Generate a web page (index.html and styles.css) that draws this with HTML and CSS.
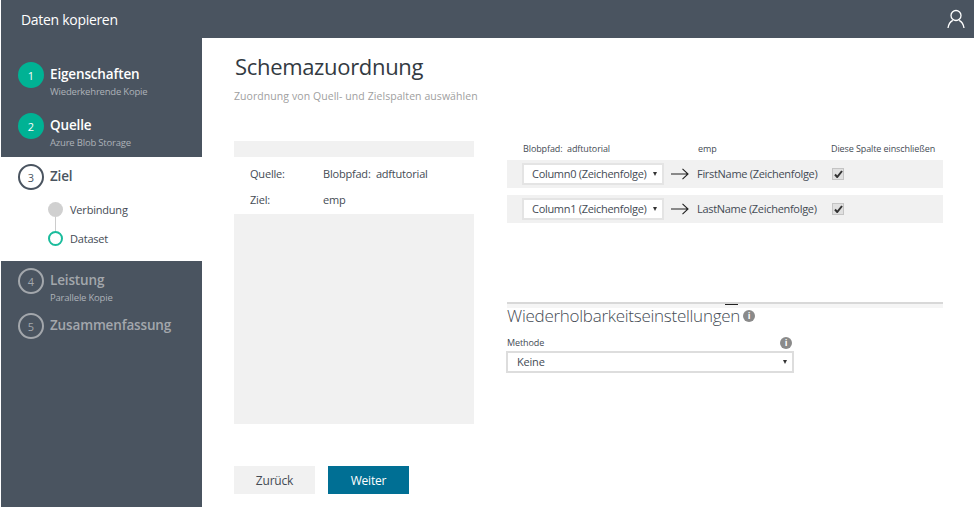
FILE: index.html
```html
<!DOCTYPE html>
<html lang="de">
<head>
  <meta charset="UTF-8">
  <title>Daten kopieren</title>
  <link rel="stylesheet" href="styles.css">
</head>
<body>
  <header class="topbar">
    <div class="app-title">Daten kopieren</div>
    <svg class="user-icon" width="18" height="20" viewBox="0 0 18 20" fill="none" stroke="#fff" stroke-width="1.3">
      <circle cx="9" cy="6.5" r="5"/>
      <path d="M1 19c.6-4 2.8-6.6 4.8-7.6M17 19c-.6-4-2.8-6.6-4.8-7.6"/>
    </svg>
  </header>
  <div class="layout">
    <nav class="sidebar">
      <div class="step step-done step-first">
        <span class="step-num">1</span>
        <div class="step-text">
          <div class="step-name">Eigenschaften</div>
          <div class="step-sub">Wiederkehrende Kopie</div>
        </div>
      </div>
      <div class="step step-done step-second">
        <span class="step-num">2</span>
        <div class="step-text">
          <div class="step-name">Quelle</div>
          <div class="step-sub">Azure Blob Storage</div>
        </div>
      </div>
      <div class="step-active">
        <div class="step step-current">
          <span class="step-num">3</span>
          <div class="step-text">
            <div class="step-name">Ziel</div>
          </div>
        </div>
        <div class="substeps">
          <div class="substep">
            <span class="dot dot-done"></span>
            <span>Verbindung</span>
          </div>
          <div class="substep">
            <span class="dot dot-current"></span>
            <span>Dataset</span>
          </div>
        </div>
      </div>
      <div class="step step-todo step-fourth">
        <span class="step-num">4</span>
        <div class="step-text">
          <div class="step-name">Leistung</div>
          <div class="step-sub">Parallele Kopie</div>
        </div>
      </div>
      <div class="step step-todo step-fifth">
        <span class="step-num">5</span>
        <div class="step-text">
          <div class="step-name">Zusammenfassung</div>
        </div>
      </div>
    </nav>
    <main class="content">
      <h1>Schemazuordnung</h1>
      <p class="subtitle">Zuordnung von Quell- und Zielspalten auswählen</p>
      <div class="columns">
        <section class="summary">
          <div class="summary-strip"></div>
          <div class="summary-rows">
            <div class="summary-row"><span class="summary-key">Quelle:</span><span>Blobpfad:&nbsp; adftutorial</span></div>
            <div class="summary-row"><span class="summary-key">Ziel:</span><span>emp</span></div>
          </div>
          <div class="summary-fill"></div>
        </section>
        <section class="mapping">
          <div class="map-head">
            <span class="map-col-source">Blobpfad:&nbsp; adftutorial</span>
            <span class="map-col-target">emp</span>
            <span>Diese Spalte einschließen</span>
          </div>
          <div class="map-row">
            <div class="fake-select map-select">Column0 (Zeichenfolge)<span class="caret"></span></div>
            <svg class="arrow" width="18" height="12" viewBox="0 0 18 12" fill="none" stroke="#222" stroke-width="1.1"><path d="M0 6h17M11.500 .8 17 6l-5.500 5.200"/></svg>
            <span class="map-target">FirstName (Zeichenfolge)</span>
            <span class="check"><svg width="9" height="8" viewBox="0 0 9 8" fill="none" stroke="#333" stroke-width="2"><path d="M1 4.500 3.200 7 8 1"/></svg></span>
          </div>
          <div class="map-row">
            <div class="fake-select map-select">Column1 (Zeichenfolge)<span class="caret"></span></div>
            <svg class="arrow" width="18" height="12" viewBox="0 0 18 12" fill="none" stroke="#222" stroke-width="1.1"><path d="M0 6h17M11.500 .8 17 6l-5.500 5.200"/></svg>
            <span class="map-target">LastName (Zeichenfolge)</span>
            <span class="check"><svg width="9" height="8" viewBox="0 0 9 8" fill="none" stroke="#333" stroke-width="2"><path d="M1 4.500 3.200 7 8 1"/></svg></span>
          </div>
          <div class="repeat">
            <span class="repeat-mark"></span>
            <h2>Wiederholbarkeitseinstellungen<span class="info">i</span></h2>
            <div class="field">
              <div class="field-label"><span>Methode</span><span class="info">i</span></div>
              <div class="fake-select method-select">Keine<span class="caret"></span></div>
            </div>
          </div>
        </section>
      </div>
      <div class="actions">
        <button class="btn">Zurück</button>
        <button class="btn btn-primary">Weiter</button>
      </div>
    </main>
  </div>
</body>
</html>
```

FILE: styles.css
```css
* {
  box-sizing: border-box;
}
body {
  margin: 0;
  height: 507px;
  overflow: hidden;
  background: #fff;
  color: #444b54;
  font-family: "Open Sans", "Noto Sans", sans-serif;
}
.topbar {
  height: 38px;
  background: #4a5460;
  display: flex;
  align-items: center;
  justify-content: space-between;
  padding: 0 9px 0 20px;
  margin-left: 1px;
}
.app-title {
  color: #fff;
  font-size: 14px;
  letter-spacing: -0.3px;
}
.layout {
  display: flex;
  height: 469px;
}

/* wizard steps */
.sidebar {
  width: 201px;
  margin-left: 1px;
  background: #4a5460;
  display: flex;
  flex-direction: column;
}
.step {
  display: flex;
  align-items: flex-start;
  gap: 6px;
  padding-left: 17px;
}
.step-first {
  padding-top: 24px;
  height: 50px;
}
.step-second {
  padding-top: 25px;
  height: 69px;
}
.step-fourth {
  padding-top: 7px;
  height: 52px;
}
.step-fifth {
  padding-top: 0;
}
.step-num {
  width: 26px;
  height: 26px;
  flex: none;
  border-radius: 50%;
  display: flex;
  align-items: center;
  justify-content: center;
  font-size: 11px;
  border: 2px solid transparent;
}
.step-text {
  line-height: 1;
  margin-top: 2px;
}
.step-name {
  font-size: 13.500px;
  font-weight: 600;
  line-height: 20px;
  letter-spacing: -0.15px;
}
.step-sub {
  font-size: 9.500px;
  line-height: 12px;
  margin-top: 2px;
  letter-spacing: -0.2px;
  color: #adb2b8;
}
.step-done .step-num {
  background: #00b294;
  color: #fff;
}
.step-done .step-name {
  color: #fff;
}
.step-current .step-num {
  border-color: #4a5460;
  color: #4a5460;
}
.step-current .step-name {
  color: #4a5460;
}
.step-todo .step-num {
  border-color: #a3a7ac;
  color: #a3a7ac;
}
.step-todo .step-name {
  color: #a3a7ac;
}
.step-todo .step-sub {
  color: #adb2b8;
}
.step-active {
  background: #fff;
  height: 104px;
  padding-top: 7px;
}
.substeps {
  margin-top: 12px;
  padding-left: 47px;
  display: flex;
  flex-direction: column;
  gap: 14px;
  position: relative;
}
.substeps::before {
  content: "";
  position: absolute;
  left: 54px;
  top: 15px;
  height: 14px;
  width: 1px;
  background: #ccc;
}
.substep {
  display: flex;
  align-items: center;
  gap: 7px;
  height: 15px;
  font-size: 11px;
  letter-spacing: -0.2px;
}
.dot {
  width: 15px;
  height: 15px;
  border-radius: 50%;
  flex: none;
  position: relative;
}
.dot-done {
  background: #d0d0d0;
}
.dot-current {
  background: #fff;
  border: 2px solid #1abc9c;
}

/* main area */
.content {
  flex: 1;
  padding: 13px 31px 0 32px;
}
h1 {
  margin: 0 0 0 1px;
  font-size: 22px;
  font-weight: 400;
  line-height: 30px;
  color: #333a42;
  letter-spacing: -0.32px;
}
.subtitle {
  margin: 7px 0 0;
  font-size: 10.500px;
  line-height: 16px;
  letter-spacing: 0.07px;
  color: #a0a0a0;
}
.columns {
  display: flex;
  gap: 33px;
  margin-top: 37px;
  height: 283px;
}
.summary {
  width: 240px;
  display: flex;
  flex-direction: column;
}
.summary-strip {
  height: 16px;
  background: #f1f1f1;
}
.summary-rows {
  height: 57px;
  padding: 3px 0 0 16px;
}
.summary-row {
  display: flex;
  height: 26px;
  align-items: center;
  font-size: 11px;
  letter-spacing: -0.2px;
}
.summary-key {
  width: 73px;
}
.summary-fill {
  flex: 1;
  background: #f1f1f1;
}
.mapping {
  width: 436px;
  position: relative;
}
.map-head {
  display: flex;
  height: 19px;
  align-items: center;
  padding: 0 0 4px 16px;
  font-size: 9px;
  letter-spacing: -0.1px;
}
.map-col-source {
  width: 175px;
}
.map-col-target {
  width: 133px;
}
.map-row {
  display: flex;
  align-items: center;
  height: 28px;
  margin-bottom: 7px;
  padding: 0 0 1px 15px;
  background: #f1f1f1;
  font-size: 11px;
  letter-spacing: -0.3px;
}
.fake-select {
  position: relative;
  background: #fff;
  border: 2px solid #e4e4e4;
}
.map-select {
  width: 142px;
  height: 22px;
  line-height: 18px;
  padding-left: 8px;
}
.caret {
  position: absolute;
  right: 5px;
  top: 50%;
  margin-top: -2px;
  border-left: 2.500px solid transparent;
  border-right: 2.500px solid transparent;
  border-top: 4px solid #333;
}
.arrow {
  margin-left: 7px;
  flex: none;
}
.map-target {
  margin-left: 8px;
  width: 135px;
  white-space: nowrap;
}
.check {
  width: 12px;
  height: 12px;
  border: 1px solid #c4c4c4;
  background: #e0e0e0;
  display: flex;
  align-items: center;
  justify-content: center;
}
.repeat {
  margin-top: 79px;
  border-top: 2px solid #d8d8d8;
  background: linear-gradient(#f5f5f5 4px, #fff 4px);
  position: relative;
}
.repeat-mark {
  position: absolute;
  left: 218px;
  top: 0;
  width: 13px;
  height: 1px;
  background: #222;
}
h2 {
  margin: 0;
  font-size: 17px;
  font-weight: 300;
  line-height: 24px;
  color: #444b54;
  letter-spacing: -0.27px;
  white-space: nowrap;
  display: flex;
  align-items: center;
  gap: 3px;
}
.info {
  width: 12px;
  height: 12px;
  border-radius: 50%;
  background: #8a8a8a;
  color: #fff;
  font-size: 9px;
  font-weight: 700;
  letter-spacing: 0;
  display: inline-flex;
  align-items: center;
  justify-content: center;
  flex: none;
}
.field {
  width: 288px;
  margin: 6px 0 0 -1px;
}
.field-label {
  display: flex;
  justify-content: space-between;
  align-items: center;
  height: 17px;
  padding: 0 2px 0 1px;
  font-size: 9px;
  letter-spacing: -0.1px;
}
.method-select {
  height: 22px;
  line-height: 18px;
  padding-left: 9px;
  border-color: #ddd;
  font-size: 11px;
  letter-spacing: -0.2px;
}
.actions {
  display: flex;
  gap: 13px;
  margin-top: 42px;
}
.btn {
  width: 81px;
  height: 28px;
  border: 0;
  padding: 0;
  background: #f1f1f1;
  color: #444b54;
  font: 12px "Open Sans", "Noto Sans", sans-serif;
  letter-spacing: -0.2px;
}
.btn-primary {
  background: #006f94;
  color: #fff;
}
```
